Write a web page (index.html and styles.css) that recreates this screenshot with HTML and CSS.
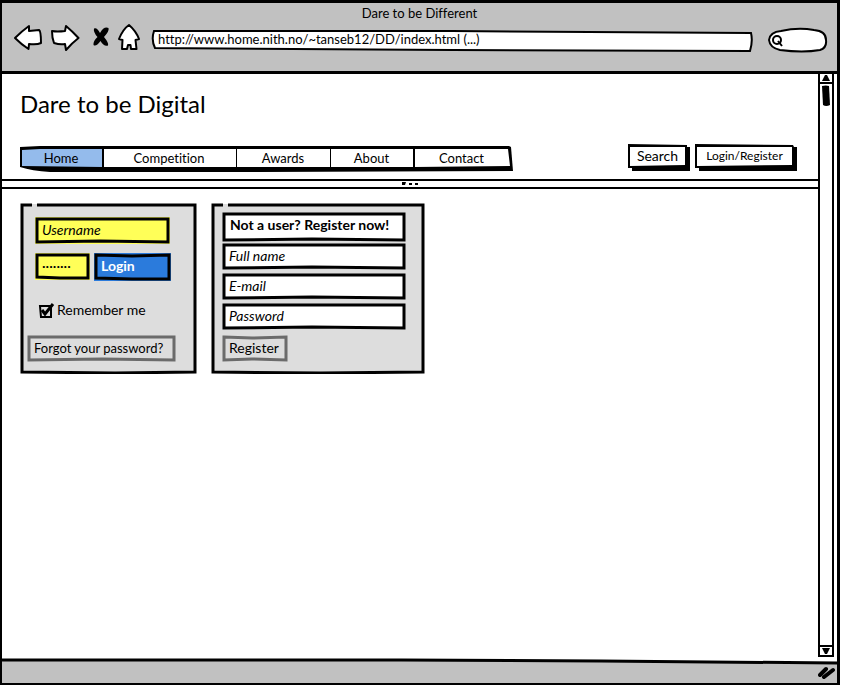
FILE: index.html
```html
<!DOCTYPE html>
<html lang="en">
<head>
<meta charset="utf-8">
<title>Dare to be Different</title>
<link rel="stylesheet" href="styles.css">
</head>
<body>
<div class="window">
  <header class="chrome">
    <div class="window-title">Dare to be Different</div>
    <div class="toolbar">
      <button class="tool back" type="button" aria-label="Back"><svg width="30" height="28" viewBox="0 0 30 28"><path d="M2 15 Q9 8 16 3 L16 8 L26 7 Q28 8 28 20 Q24 22 16 21 L15.500 26 Q9 22 2 15 Z"/></svg></button>
      <button class="tool forward" type="button" aria-label="Forward"><svg width="30" height="28" viewBox="0 0 30 28"><path d="M2 8 Q7 9 15 8 L16 3 Q22 8 28.500 15 Q22 20 16 27 L15 21 Q10 22 4 20 Q2 15 2 8 Z"/></svg></button>
      <button class="tool stop" type="button" aria-label="Stop"><svg width="18" height="22" viewBox="0 0 18 22"><path class="ink" d="M2 2.500 Q5 1 8 7 Q12 0 16.500 2 Q17.500 5 12 11 Q17 17 16 19.500 Q12 21 8.500 15 Q4 21 1.500 19 Q1 15 5.500 11 Q1 6 2 2.500 Z"/></svg></button>
      <button class="tool home" type="button" aria-label="Home"><svg width="24" height="28" viewBox="0 0 24 28"><path d="M12 2 Q19 8 22 16 L18.500 17 L19.500 26 L14 26 L13.500 22 L11 22 L10 26 L5 26 L5.500 17 L2 16 Q6 6 12 2 Z"/></svg></button>
      <div class="field address">
        <svg class="frame" viewBox="0 0 601 23" preserveAspectRatio="none"><path class="thin" d="M3 2 L300 2 L599 4 Q601 12 598 22 L300 21 L4 19 Q0 11 3 2 Z"/></svg>
        <input type="text" aria-label="Address" value="http://www.home.nith.no/~tanseb12/DD/index.html (...)">
      </div>
      <div class="field find">
        <svg class="frame" viewBox="0 0 60 26" preserveAspectRatio="none"><path class="thin" d="M13 4 Q30 0 46 3 Q58 4 58 13 Q59 21 52 23 Q35 26 12 23 Q2 21 1 13 Q2 5 13 4 Z"/><circle class="lens" cx="9" cy="13" r="4"/><path class="lens" d="M10 14 L14 19"/></svg>
        <input type="search" aria-label="Find">
      </div>
    </div>
  </header>

  <div class="viewport">
    <main class="page">
      <div class="masthead">
        <h1>Dare to be Digital</h1>
        <div class="menu-row">
          <nav class="menu">
            <svg class="frame" viewBox="0 0 493 26" preserveAspectRatio="none">
              <path class="ink" d="M0 1 L20 0 L250 0 L489 0 L491 1 L493 25 L240 26 L83 26 L30 26 Q12 25 0 21 Z"/>
              <path fill="#94bbec" d="M2 4 L20 3 L82 3 L82 21 L2 20 Z"/>
              <path fill="#fff" d="M84 3 H216 V21 H84 Z M217 3 H310 V21 H217 Z M311 3 H393 V21 H311 Z M395 3 L488 3 L490 20 L395 21 Z"/>
            </svg>
            <a class="w-home" href="#">Home</a><a class="w-competition" href="#">Competition</a><a class="w-awards" href="#">Awards</a><a class="w-about" href="#">About</a><a class="w-contact" href="#">Contact</a>
          </nav>
          <div class="actions">
            <button class="raised search" type="button"><svg class="frame" viewBox="0 0 62 27" preserveAspectRatio="none"><path class="ink" d="M0 0 L59 1 L59 3 L62 3 L62 27 L4 27 L4 24 L0 24 Z"/><path fill="#fff" d="M2 3 L57 3 L57 21 L2 22 Z"/></svg><span>Search</span></button>
            <button class="raised login-link" type="button"><svg class="frame" viewBox="0 0 102 27" preserveAspectRatio="none"><path class="ink" d="M0 0 L98 1 L99 3 L102 3 L102 27 L4 27 L4 24 L0 24 Z"/><path fill="#fff" d="M2 3 L97 3 L97 21 L2 22 Z"/></svg><span>Login/Register</span></button>
          </div>
        </div>
      </div>
      <div class="splitter"><svg width="18" height="4" viewBox="0 0 18 4"><path class="ink" d="M1 0 H5 L4 3 H1 Z M8 1 H11 V3 H8 Z M14 1 H17 V3 H14 Z"/></svg></div>

      <div class="panels">
        <form class="panel login-panel">
          <svg class="frame" viewBox="0 0 177 171" preserveAspectRatio="none"><path fill="#ddd" d="M1 1 H175 V169 H1 Z"/><path class="stroke" d="M17 2 L90 2 L175 2 L175 80 L175 169 L95 170 L2 169 L2 80 L2 2 L12 2"/></svg>
          <div class="field username"><svg class="frame" viewBox="0 0 135 27" preserveAspectRatio="none"><path fill="#ffff58" d="M0 0 H135 V27 H0 Z"/><path class="stroke" d="M2 2 L65 2 L133 2 L133 25 L65 24 L2 25 Z"/></svg><input type="text" aria-label="Username" placeholder="Username"></div>
          <div class="credentials">
            <div class="field secret"><svg class="frame" viewBox="0 0 55 27" preserveAspectRatio="none"><path fill="#ffff58" d="M0 0 H55 V27 H0 Z"/><path class="stroke" d="M2 2 L25 2 L53 2 L53 25 L25 25 L2 24 Z"/></svg><input type="password" aria-label="Password" placeholder="········"></div>
            <button class="login" type="submit"><svg class="frame" viewBox="0 0 77 28" preserveAspectRatio="none"><path fill="#2b7bdc" d="M0 0 H77 V28 H0 Z"/><path class="stroke" d="M2 2 L38 3 L75 2 L75 26 L38 26 L2 25 Z"/></svg><span>Login</span></button>
          </div>
          <label class="remember"><input type="checkbox" checked><svg width="17" height="17" viewBox="0 0 17 17"><path class="box" d="M2 4 L13 4 L13 15 L3 15 Z"/><path class="box tick" d="M4 8 L7 12 L15 2"/></svg><span>Remember me</span></label>
          <button class="plain forgot" type="button"><svg class="frame muted" viewBox="0 0 149 27" preserveAspectRatio="none"><path class="stroke" d="M2 2 L70 2 L147 2 L147 25 L75 24 L2 25 Z"/></svg><span>Forgot your password?</span></button>
        </form>

        <form class="panel register-panel">
          <svg class="frame" viewBox="0 0 214 171" preserveAspectRatio="none"><path fill="#ddd" d="M1 1 H212 V169 H1 Z"/><path class="stroke" d="M17 2 L110 2 L212 2 L212 80 L212 169 L110 170 L2 169 L2 80 L2 2 L12 2"/></svg>
          <div class="field heading"><svg class="frame" viewBox="0 0 184 30" preserveAspectRatio="none"><path class="stroke" d="M2 2 L90 2 L182 2 L182 28 L90 27 L2 28 Z"/></svg><h2>Not a user? Register now!</h2></div>
          <div class="field"><svg class="frame" viewBox="0 0 184 27" preserveAspectRatio="none"><path class="stroke white" d="M2 2 L90 2 L182 2 L182 25 L90 24 L2 25 Z"/></svg><input type="text" aria-label="Full name" placeholder="Full name"></div>
          <div class="field"><svg class="frame" viewBox="0 0 184 27" preserveAspectRatio="none"><path class="stroke white" d="M2 2 L90 2 L182 2 L182 25 L90 24 L2 25 Z"/></svg><input type="email" aria-label="E-mail" placeholder="E-mail"></div>
          <div class="field"><svg class="frame" viewBox="0 0 184 27" preserveAspectRatio="none"><path class="stroke white" d="M2 2 L90 2 L182 2 L182 25 L90 24 L2 25 Z"/></svg><input type="password" aria-label="New password" placeholder="Password"></div>
          <button class="plain register" type="submit"><svg class="frame muted" viewBox="0 0 66 27" preserveAspectRatio="none"><path class="stroke" d="M2 2 L30 3 L64 2 L64 25 L30 24 L2 25 Z"/></svg><span>Register</span></button>
        </form>
      </div>
    </main>

    <div class="scrollbar" aria-hidden="true">
      <svg class="cap" width="12" height="8" viewBox="0 0 12 8"><path class="ink" d="M5 1 L7 1 L10 7 L2 7 Z"/></svg>
      <div class="track"><svg width="10" height="22" viewBox="0 0 10 22"><path class="ink" d="M1 1 Q5 0 8 1 L9 20 Q5 22 2 20 Z"/></svg></div>
      <svg class="cap" width="12" height="8" viewBox="0 0 12 8"><path class="ink" d="M2 1 L10 1 L7 7 L5 7 Z"/></svg>
    </div>
  </div>

  <footer class="status">
    <svg class="edge" viewBox="0 0 836 8" preserveAspectRatio="none"><path fill="#fff" d="M0 0 H836 V5 L400 2 L0 2 Z"/><path class="stroke" d="M0 2 L400 2 L600 3 L836 5"/></svg>
    <svg class="grip" width="18" height="14" viewBox="0 0 18 14"><path d="M2 9 L8 3 M6 11 L15 4"/></svg>
  </footer>
</div>
</body>
</html>
```
FILE: styles.css
```css
* { box-sizing: border-box; }

body {
  margin: 0;
  background: #fff;
  color: #000;
  font-family: Lato, "Open Sans", sans-serif;
  font-size: 13px;
  line-height: 16px;
  font-variant-ligatures: none;
}

button, input {
  margin: 0;
  padding: 0;
  border: 0;
  background: none;
  color: inherit;
  font: inherit;
  outline: 0;
}

svg { display: block; flex: none; }
.ink { fill: #000; }
.stroke { fill: none; stroke: currentColor; stroke-width: 3; }
.white, .heading .stroke { fill: #fff; }
.thin { fill: #fff; stroke: #000; stroke-width: 2; }
.lens { fill: none; stroke: #000; stroke-width: 2; }
.muted { color: #6b6b6b; }

/* Hand-drawn outline stretched behind a control */
.frame {
  position: absolute;
  inset: 0;
  width: 100%;
  height: 100%;
  z-index: -1;
}

.window {
  display: flex;
  flex-direction: column;
  min-height: 100vh;
  margin-right: 1px;
  border: 2px solid #000;
  border-width: 3px 3px 2px 2px;
}

/* Browser chrome */
.chrome {
  height: 71px;
  background: #c1c1c1;
  border-bottom: 3px solid #000;
  position: relative;
  z-index: 0;
}

.window-title { padding-top: 2px; text-align: center; }

.toolbar {
  display: flex;
  align-items: center;
  height: 30px;
  margin-top: 1px;
  padding: 0 9px 0 11px;
}

.tool { flex: none; }
.tool path { fill: #fff; stroke: #000; stroke-width: 2; stroke-linejoin: round; }
.tool .ink { fill: #000; stroke: none; }
.back { margin-right: 7px; }
.forward { margin-right: 12px; }
.stop { margin-right: 7px; }
.home { margin-right: 10px; }

.field { position: relative; z-index: 0; display: flex; height: 27px; }
.field input { width: 100%; min-width: 0; padding: 0 7px 2px; }
.field input::placeholder { color: #000; opacity: 1; font-style: italic; }
.field.address { flex: 1; height: 23px; margin: 6px 15px 0 0; }
.field.address input { padding: 0 7px 2px; }
.field.find { flex: none; width: 60px; height: 26px; margin-top: 6px; }
.field.find input { padding: 0 8px 0 18px; }

/* Viewport */
.viewport { display: flex; flex: 1; padding-right: 3px; }
.page { flex: 1; min-width: 0; }
.masthead { padding: 16px 21px 7px 18px; }

h1 { margin: 0; font-size: 24px; line-height: 28px; font-weight: 400; }

.menu-row { display: flex; justify-content: space-between; margin-top: 26px; }

.menu { position: relative; z-index: 0; display: flex; height: 26px; margin-top: 2px; padding-right: 3px; }
.menu a { color: inherit; text-decoration: none; text-align: center; line-height: 24px; }
.w-home { width: 82px; }
.w-competition { width: 134px; }
.w-awards { width: 94px; }
.w-about { width: 83px; }
.w-contact { width: 97px; }

.actions { display: flex; gap: 5px; }
.raised { position: relative; z-index: 0; height: 27px; padding: 0 3px 3px 0; }
.search { width: 62px; font-size: 14px; }
.login-link { width: 102px; font-size: 12px; }

.splitter {
  display: flex;
  justify-content: center;
  height: 10px;
  padding-top: 1px;
  border-top: 2px solid #000;
  border-bottom: 2px solid #000;
}

/* Forms */
.panels { display: flex; align-items: flex-start; gap: 14px; padding: 14px 18px; font-size: 14px; }
.panel { position: relative; z-index: 0; display: flex; flex-direction: column; align-items: flex-start; height: 171px; }
.login-panel { width: 177px; padding: 14px 7px 0; }
.register-panel { width: 214px; padding: 9px 19px 0 11px; gap: 3px; }
.register-panel .field { width: 100%; }

.username { width: 135px; margin-left: 8px; }
.credentials { display: flex; gap: 4px; margin: 9px 0 0 8px; }
.secret { width: 55px; }
.login { position: relative; z-index: 0; width: 77px; height: 28px; padding: 0 7px 2px; text-align: left; font-weight: 700; }
.login span { color: #fff; }

.remember { display: flex; align-items: center; gap: 2px; height: 18px; margin: 20px 0 0 11px; position: relative; }
.remember input { position: absolute; width: 17px; height: 17px; opacity: 0; }
.box { fill: none; stroke: #000; stroke-width: 2; }
.tick { stroke-width: 3; }

.plain { position: relative; z-index: 0; height: 27px; padding: 0 7px 2px; text-align: left; white-space: nowrap; }
.forgot { width: 149px; margin-top: 16px; font-size: 13px; }
.register-panel .heading { height: 30px; margin-bottom: -2px; }
h2 { margin: 0; padding: 5px 8px; font-size: 14px; line-height: 16px; font-weight: 700; white-space: nowrap; }
.register { width: 66px; margin-top: 2px; }

/* Scrollbar */
.scrollbar {
  display: flex;
  flex-direction: column;
  align-items: center;
  width: 16px;
  margin-bottom: 1px;
  border: 2px solid #000;
  border-top: 0;
}
.track {
  display: flex;
  justify-content: center;
  flex: 1;
  width: 100%;
  padding-top: 1px;
  border-top: 2px solid #000;
  border-bottom: 2px solid #000;
}

/* Status bar */
.status { height: 25px; background: #c1c1c1; }
.edge { width: 100%; height: 8px; }
.grip { margin: 0 1px 0 auto; fill: none; stroke: #000; stroke-width: 4; stroke-linecap: round; }
```
